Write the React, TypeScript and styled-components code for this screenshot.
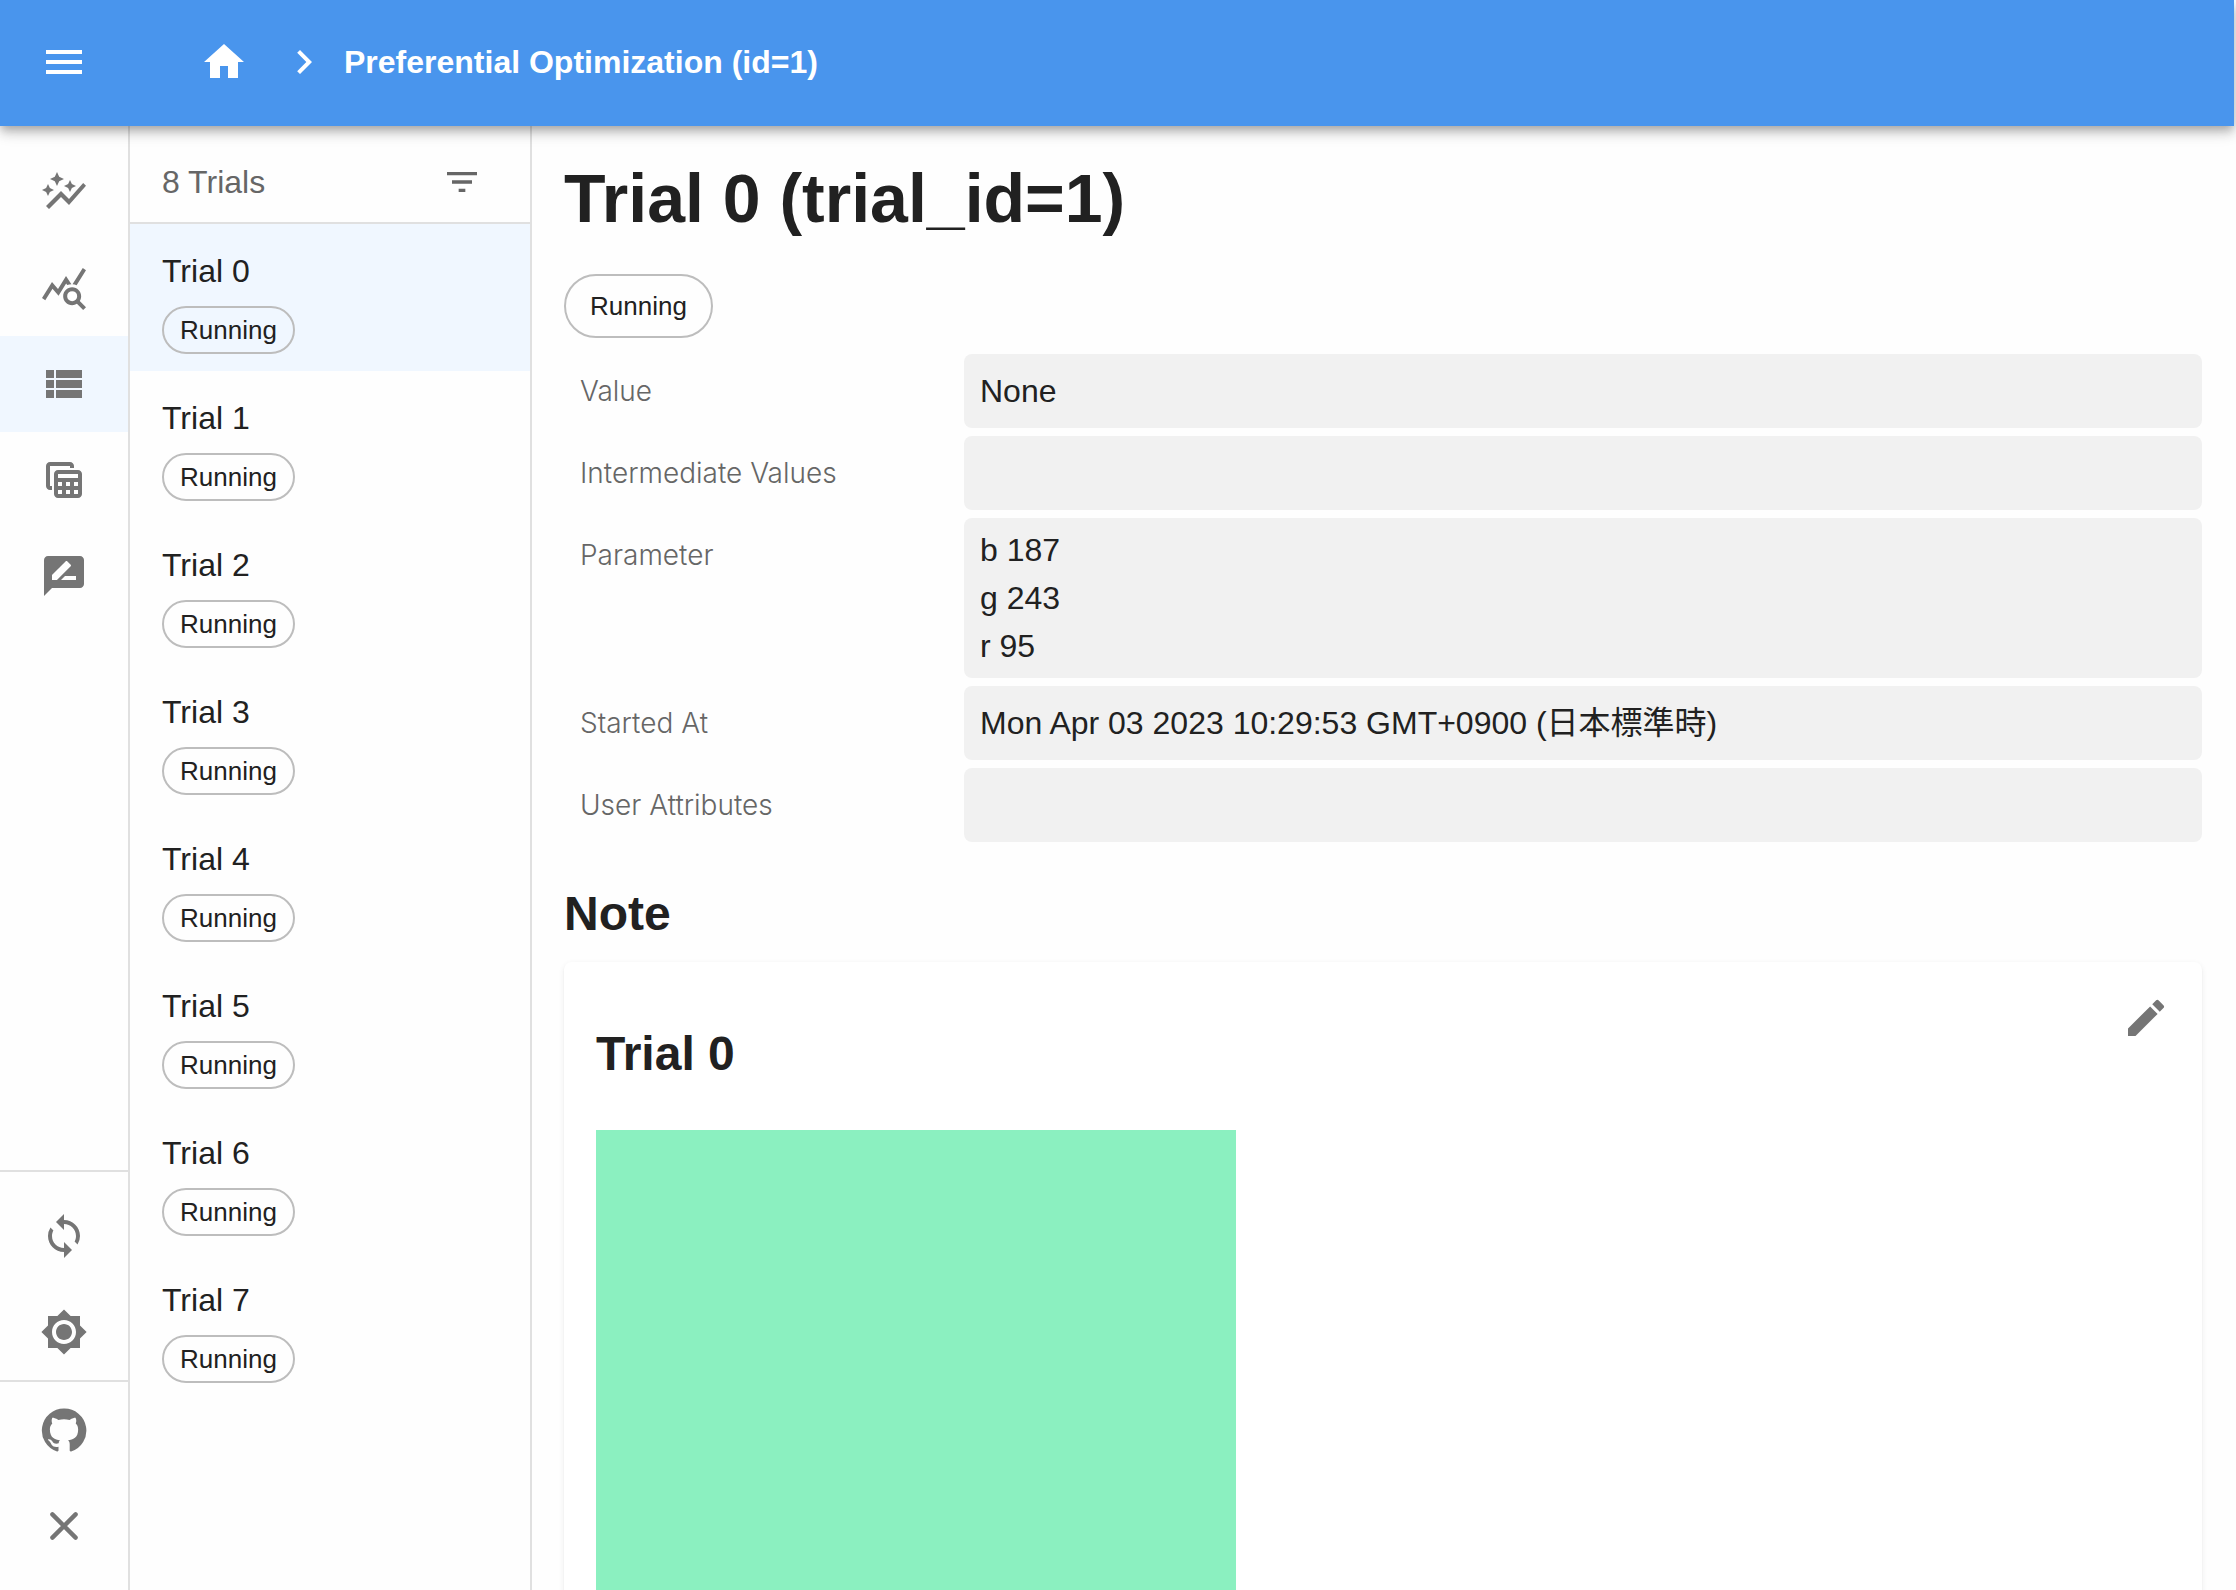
import React from "react";
import styled, { createGlobalStyle } from "styled-components";
import {
  MdAutoGraph,
  MdBrightness7,
  MdChevronRight,
  MdEdit,
  MdFilterList,
  MdHome,
  MdMenu,
  MdQueryStats,
  MdRateReview,
  MdSync,
  MdTableView,
  MdViewList,
} from "react-icons/md";

const colors = {
  primary: "#4995ed",
  text: "#212121",
  muted: "#666666",
  icon: "#757575",
  divider: "#e0e0e0",
  selected: "#f0f7ff",
  field: "#f1f1f1",
};

const GlobalStyle = createGlobalStyle`
  *, *::before, *::after { box-sizing: border-box; }
  html, body, #root { height: 100%; }
  body {
    margin: 0;
    background: #fefefe;
    color: ${colors.text};
    font-family: "Liberation Sans", Arial, "Noto Sans CJK JP", sans-serif;
    font-size: 32px;
    line-height: 48px;
    overflow: hidden;
  }
  h1, h2, h3, dl, dd, ul { margin: 0; padding: 0; }
  ul { list-style: none; }
  svg { display: block; flex: none; }
`;

const Page = styled.div`
  display: flex;
  flex-direction: column;
  height: 100vh;
  padding-right: 2px;
`;

const AppBar = styled.header`
  position: relative;
  z-index: 1;
  flex: none;
  display: flex;
  align-items: center;
  height: 126px;
  padding: 0 24px 2px;
  background: ${colors.primary};
  color: #fff;
  box-shadow:
    0 4px 8px -2px rgba(0, 0, 0, 0.2),
    0 8px 10px rgba(0, 0, 0, 0.14),
    0 2px 20px rgba(0, 0, 0, 0.12);
`;

const IconButton = styled.button`
  display: flex;
  padding: 16px;
  border: 0;
  border-radius: 50%;
  background: none;
  color: inherit;
  cursor: pointer;
`;

const Breadcrumbs = styled.nav`
  display: flex;
  align-items: center;
  gap: 16px;
  margin-left: 80px;
  font-weight: 700;

  a {
    display: flex;
    padding: 0 16px;
    color: inherit;
  }
`;

const Crumb = styled.div`
  display: flex;
  align-items: center;
  gap: 16px;
`;

const Body = styled.div`
  flex: 1;
  min-height: 0;
  display: flex;
`;

const Drawer = styled.nav`
  flex: none;
  display: flex;
  flex-direction: column;
  width: 130px;
  padding: 18px 0 16px;
  border-right: 2px solid ${colors.divider};
  color: ${colors.icon};
`;

const Spacer = styled.div`
  flex: 1;
`;

const DrawerGroup = styled.ul<{ $ruled?: boolean; $spaced?: boolean }>`
  border-top: ${(p) => (p.$ruled ? `2px solid ${colors.divider}` : "0")};
  padding-top: ${(p) => (p.$spaced ? "16px" : "0")};
`;

const DrawerButton = styled.button<{ $selected?: boolean }>`
  display: flex;
  align-items: center;
  justify-content: center;
  width: 100%;
  height: 96px;
  padding: 0;
  border: 0;
  background: ${(p) => (p.$selected ? colors.selected : "none")};
  color: inherit;
  cursor: pointer;
`;

const TrialPane = styled.aside`
  flex: none;
  width: 402px;
  border-right: 2px solid ${colors.divider};
`;

const TrialPaneHeader = styled.div`
  display: flex;
  align-items: center;
  justify-content: space-between;
  height: 98px;
  padding: 16px 32px 0;
  border-bottom: 2px solid ${colors.divider};
  color: ${colors.muted};
`;

const TrialButton = styled.button<{ $selected?: boolean }>`
  display: flex;
  flex-direction: column;
  align-items: flex-start;
  gap: 11px;
  width: 100%;
  height: 147px;
  padding: 23px 32px 0;
  border: 0;
  background: ${(p) => (p.$selected ? colors.selected : "none")};
  color: inherit;
  font: inherit;
  text-align: left;
  cursor: pointer;
`;

const Chip = styled.span<{ $large?: boolean }>`
  display: inline-flex;
  align-items: center;
  height: ${(p) => (p.$large ? "64px" : "48px")};
  padding: ${(p) => (p.$large ? "0 24px" : "0 16px")};
  border: 2px solid #bdbdbd;
  border-radius: 32px;
  font-size: 26px;
`;

const Main = styled.main`
  flex: 1;
  min-width: 0;
  padding: 32px;
  overflow: hidden;
`;

const PageTitle = styled.h1`
  margin-bottom: 36px;
  font-size: 68px;
  line-height: 80px;
`;

const Fields = styled.dl`
  display: flex;
  flex-direction: column;
  gap: 8px;
  margin-top: 16px;
`;

const Field = styled.div`
  display: flex;
`;

const FieldLabel = styled.dt`
  flex: none;
  width: 400px;
  padding: 13px 16px;
  color: ${colors.muted};
  font-family: Inter, "Liberation Sans", sans-serif;
  font-size: 28px;
  font-weight: 300;
`;

const FieldValue = styled.dd<{ $dense?: boolean }>`
  flex: 1;
  min-height: 74px;
  padding: ${(p) => (p.$dense ? "8px 16px" : "13px 16px")};
  border-radius: 8px;
  background: ${colors.field};
`;

const SectionTitle = styled.h2`
  margin: 40px 0 16px;
  font-size: 48px;
  line-height: 64px;
`;

const Card = styled.section`
  padding: 32px;
  border-radius: 8px;
  background: #fff;
  box-shadow:
    0 4px 2px -2px rgba(0, 0, 0, 0.06),
    0 2px 2px rgba(0, 0, 0, 0.05),
    0 2px 6px rgba(0, 0, 0, 0.07);
`;

const CardHeader = styled.div`
  display: flex;
  align-items: flex-start;
  justify-content: space-between;
`;

const NoteTitle = styled.h3`
  padding: 28px 0 44px;
  font-size: 48px;
  line-height: 64px;
`;

const EditButton = styled.button`
  padding: 0;
  border: 0;
  background: none;
  color: ${colors.icon};
  cursor: pointer;
`;

const Swatch = styled.div`
  width: 640px;
  height: 640px;
  background: #8bf0c0;
`;

function GitHubIcon() {
  return (
    <svg width="48" height="48" viewBox="0 0 24 24" fill="currentColor">
      <path d="M12 1.27a11 11 0 00-3.48 21.46c.55.09.73-.28.73-.55v-1.84c-3.03.64-3.67-1.46-3.67-1.46-.55-1.29-1.28-1.65-1.28-1.65-.92-.65.1-.65.1-.65 1.1 0 1.73 1.1 1.73 1.1.92 1.65 2.57 1.2 3.21.92a2 2 0 01.64-1.47c-2.47-.27-5.04-1.19-5.04-5.5 0-1.1.46-2.1 1.2-2.84a3.76 3.76 0 010-2.93s.91-.28 3.11 1.1c1.8-.49 3.7-.49 5.5 0 2.1-1.38 3.02-1.1 3.02-1.1a3.76 3.76 0 01.1 2.93c.83.74 1.2 1.74 1.2 2.94 0 4.21-2.57 5.13-5.04 5.4.45.37.82.92.82 2.02v3.03c0 .27.1.64.73.55A11 11 0 0012 1.27" />
    </svg>
  );
}

function CloseIcon() {
  return (
    <svg width="48" height="48" viewBox="0 0 24 24" fill="none" stroke="currentColor" strokeWidth="2.2" strokeLinecap="round">
      <path d="M6.2 6.2l11.6 11.6M17.8 6.2L6.2 17.8" />
    </svg>
  );
}

const pages = [
  { label: "History", icon: <MdAutoGraph size={48} /> },
  { label: "Analytics", icon: <MdQueryStats size={48} /> },
  { label: "Trials (List)", icon: <MdViewList size={48} />, selected: true },
  { label: "Trials (Table)", icon: <MdTableView size={48} /> },
  { label: "Note", icon: <MdRateReview size={48} /> },
];

const settings = [
  { label: "Live update", icon: <MdSync size={48} /> },
  { label: "Toggle color mode", icon: <MdBrightness7 size={48} /> },
];

const links = [
  { label: "GitHub", icon: <GitHubIcon /> },
  { label: "Close drawer", icon: <CloseIcon /> },
];

const trials = Array.from({ length: 8 }, (_, number) => ({ number, state: "Running" }));

const fields = [
  { label: "Value", lines: ["None"] },
  { label: "Intermediate Values", lines: [] },
  { label: "Parameter", lines: ["b 187", "g 243", "r 95"] },
  { label: "Started At", lines: ["Mon Apr 03 2023 10:29:53 GMT+0900 (日本標準時)"] },
  { label: "User Attributes", lines: [] },
];

type NavItem = { label: string; icon: React.ReactNode; selected?: boolean };

function DrawerItems({ items }: { items: NavItem[] }) {
  return (
    <>
      {items.map((item) => (
        <li key={item.label}>
          <DrawerButton type="button" aria-label={item.label} $selected={item.selected}>
            {item.icon}
          </DrawerButton>
        </li>
      ))}
    </>
  );
}

export default function App() {
  return (
    <Page>
      <GlobalStyle />
      <AppBar>
        <IconButton type="button" aria-label="Open drawer">
          <MdMenu size={48} />
        </IconButton>
        <Breadcrumbs aria-label="Breadcrumb">
          <a href="#home" aria-label="Home">
            <MdHome size={48} />
          </a>
          <Crumb>
            <MdChevronRight size={48} />
            <span>Preferential Optimization (id=1)</span>
          </Crumb>
        </Breadcrumbs>
      </AppBar>
      <Body>
        <Drawer aria-label="Study">
          <DrawerGroup>
            <DrawerItems items={pages} />
          </DrawerGroup>
          <Spacer />
          <DrawerGroup $ruled $spaced>
            <DrawerItems items={settings} />
          </DrawerGroup>
          <DrawerGroup $ruled>
            <DrawerItems items={links} />
          </DrawerGroup>
        </Drawer>
        <TrialPane>
          <TrialPaneHeader>
            <span>{trials.length} Trials</span>
            <IconButton type="button" aria-label="Filter">
              <MdFilterList size={40} />
            </IconButton>
          </TrialPaneHeader>
          <ul>
            {trials.map((trial) => (
              <li key={trial.number}>
                <TrialButton type="button" $selected={trial.number === 0}>
                  <span>Trial {trial.number}</span>
                  <Chip>{trial.state}</Chip>
                </TrialButton>
              </li>
            ))}
          </ul>
        </TrialPane>
        <Main>
          <PageTitle>Trial 0 (trial_id=1)</PageTitle>
          <Chip $large>Running</Chip>
          <Fields>
            {fields.map((field) => (
              <Field key={field.label}>
                <FieldLabel>{field.label}</FieldLabel>
                <FieldValue $dense={field.lines.length > 1}>
                  {field.lines.map((line) => (
                    <div key={line}>{line}</div>
                  ))}
                </FieldValue>
              </Field>
            ))}
          </Fields>
          <SectionTitle>Note</SectionTitle>
          <Card>
            <CardHeader>
              <NoteTitle>Trial 0</NoteTitle>
              <EditButton type="button" aria-label="Edit note">
                <MdEdit size={48} />
              </EditButton>
            </CardHeader>
            <Swatch />
          </Card>
        </Main>
      </Body>
    </Page>
  );
}
